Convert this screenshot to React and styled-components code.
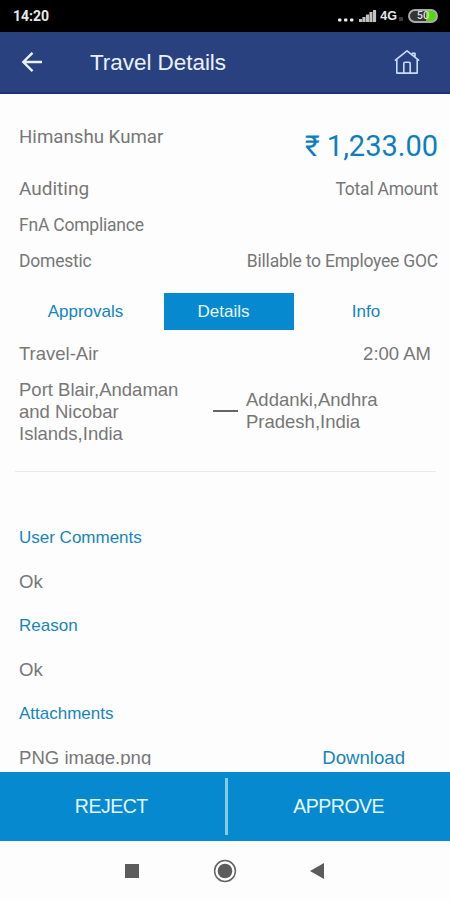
import React, { useState } from 'react';
import styled, { createGlobalStyle } from 'styled-components';

const GlobalStyle = createGlobalStyle`
  * {
    box-sizing: border-box;
  }

  body {
    margin: 0;
    background: #fdfdfd;
  }
`;

const Screen = styled.div`
  display: flex;
  flex-direction: column;
  width: 450px;
  height: 900px;
  overflow: hidden;
  background: #fdfdfd;
  color: #777;
  font-family: 'Liberation Sans', Arial, sans-serif;
`;

// Phone status bar
const StatusBar = styled.div`
  display: flex;
  flex: none;
  align-items: center;
  justify-content: space-between;
  height: 32px;
  padding: 0 12px 0 13px;
  background: #000;
  color: #e8e8e8;
  font-family: Roboto, sans-serif;
`;

const Clock = styled.span`
  font-size: 14px;
  font-weight: 700;
  line-height: 32px;
`;

const StatusIcons = styled.div`
  display: flex;
  align-items: center;
  height: 32px;
`;

const Network = styled.span`
  margin: 0 2px 0 3px;
  font-family: 'Liberation Sans', Arial, sans-serif;
  font-size: 12.5px;
  font-weight: 700;
`;

const Roaming = styled.span`
  width: 4px;
  height: 4px;
  margin: 6px 5px 0 0;
  background: #3c3c3c;
`;

const Battery = styled.span`
  width: 30px;
  height: 14px;
  border: 2px solid #aaa;
  border-radius: 7px;
  background: linear-gradient(90deg, #333 62%, #55d614 62%);
  color: #ddd;
  font-size: 11px;
  font-weight: 500;
  line-height: 10px;
  text-align: center;
`;

// App header
const Header = styled.header`
  display: flex;
  flex: none;
  align-items: center;
  height: 62px;
  padding: 0 30px 0 20px;
  border-bottom: 2px solid #173374;
  background: #29417f;
  color: #e9f1ff;
`;

const IconButton = styled.button`
  display: flex;
  padding: 0;
  border: none;
  background: none;
  color: inherit;
  cursor: pointer;
`;

const Title = styled.h1`
  flex: 1;
  margin: 1px 0 0 46px;
  font-size: 22.5px;
  font-weight: 400;
  letter-spacing: -0.05px;
  line-height: 28px;
`;

const Body = styled.main`
  flex: none;
  height: 671px;
  overflow: hidden;
`;

const Summary = styled.section`
  display: flex;
  justify-content: space-between;
  height: 199px;
  padding: 32px 12px 0 19px;
  font-family: Roboto, sans-serif;
`;

const Column = styled.div`
  display: flex;
  flex-direction: column;
  align-items: ${(props) => (props.$right ? 'flex-end' : 'flex-start')};
`;

const Line = styled.div`
  height: 22px;
  margin-bottom: ${(props) => props.$gap || 14}px;
  font-size: ${(props) => props.$size || 17.5}px;
  letter-spacing: ${(props) => (props.$size ? 0 : -0.22)}px;
  line-height: ${(props) => (props.$size ? 23 : 24)}px;
  white-space: nowrap;
`;

const Amount = styled.div`
  height: 36px;
  margin: 2px 0 13px;
  color: #0d7fc0;
  font-size: 29px;
  line-height: 36px;
`;

const Tabs = styled.nav`
  display: flex;
  justify-content: center;
  height: 37px;
  padding-left: 8px;
`;

const Tab = styled.button`
  flex: none;
  width: ${(props) => props.$width}px;
  padding: 0 ${(props) => props.$inset}px 0 0;
  border: none;
  background: ${(props) => (props.$active ? '#0789d0' : 'transparent')};
  color: ${(props) => (props.$active ? '#e6f7ff' : '#1484c4')};
  font-family: inherit;
  font-size: 17px;
  line-height: 37px;
  cursor: pointer;
`;

const Trip = styled.section`
  height: 142px;
  margin: 0 14px 0 15px;
  padding: 13px 5px 0 4px;
  border-bottom: 1px solid #e9e9e9;
  font-size: 18.5px;
  line-height: 22px;
`;

const TripHead = styled.div`
  display: flex;
  justify-content: space-between;
`;

const Route = styled.div`
  display: flex;
  align-items: center;
  margin-top: 14px;
`;

const Place = styled.div`
  width: ${(props) => props.$width}px;
  padding-bottom: ${(props) => props.$lift || 0}px;
`;

const Dash = styled.span`
  width: 25px;
  height: 2px;
  margin: -2px 8px 0 28px;
  background: #666;
`;

const Notes = styled.section`
  padding: 56px 45px 0 19px;
`;

const Label = styled.h2`
  margin: 0;
  color: #1785bb;
  font-size: 17px;
  font-weight: 400;
  line-height: 20px;
`;

const Value = styled.div`
  display: flex;
  justify-content: space-between;
  margin: 24px 0;
  font-size: 18.6px;
  line-height: 20px;
`;

const Download = styled.a`
  color: #1785bb;
  cursor: pointer;
`;

const Actions = styled.footer`
  display: flex;
  flex: none;
  align-items: center;
  height: 69px;
  margin-top: 7px;
  background: #0789d0;
`;

const Action = styled.button`
  flex: 1;
  padding: 0 ${(props) => props.$inset || 0}px 1px 0;
  border: none;
  background: none;
  color: #e2f7ff;
  font-family: inherit;
  font-size: 19.5px;
  letter-spacing: -0.5px;
  line-height: 67px;
  cursor: pointer;
`;

const Divider = styled.span`
  width: 3px;
  height: 57px;
  background: #84cbe0;
`;

const NavBar = styled.div`
  display: flex;
  flex: none;
  align-items: center;
  justify-content: center;
  gap: 73px;
  height: 59px;
`;

const SignalIcon = () => (
  <svg width="41" height="14" viewBox="0 0 41 14" fill="#eee">
    <rect x="2" y="9.5" width="3.4" height="3" rx="1" />
    <rect x="8" y="9.5" width="3.4" height="3" rx="1" />
    <rect x="14" y="9.5" width="3.4" height="3" rx="1" />
    <g fill="#c2c2c2">
      <rect x="23" y="10" width="3.1" height="3" />
      <rect x="26.4" y="8" width="3.1" height="5" />
      <rect x="29.9" y="5.5" width="3.1" height="7.5" />
      <rect x="33.4" y="3" width="3.1" height="10" />
      <rect x="37" y="1" width="3.1" height="12" />
    </g>
  </svg>
);

const BackIcon = () => (
  <svg width="24" height="22" viewBox="0 0 24 22" fill="none" stroke="currentColor" strokeWidth="2.4">
    <path d="M22 11H3.5M12.5 1.8L3.3 11l9.2 9.2" />
  </svg>
);

const HomeIcon = () => (
  <svg width="26" height="26" viewBox="0 0 26 26" fill="none" stroke="#c9dcfb" strokeWidth="1.6" strokeLinejoin="round" strokeLinecap="round">
    <path d="M1.4 11.2L13 1.8l11.6 9.4M2.8 10.2v13.9h20.4V10.2M9.8 24v-9.6q0-1.2 1.2-1.2h4q1.2 0 1.2 1.2V24M18.4 4.4h2.6v3.2" />
  </svg>
);

const tabs = [
  { name: 'Approvals', width: 156, inset: 1 },
  { name: 'Details', width: 130, inset: 11 },
  { name: 'Info', width: 156, inset: 12 },
];

const App = () => {
  const [active, setActive] = useState('Details');

  return (
    <Screen>
      <GlobalStyle />
      <StatusBar>
        <Clock>14:20</Clock>
        <StatusIcons>
          <SignalIcon />
          <Network>4G</Network>
          <Roaming />
          <Battery>50</Battery>
        </StatusIcons>
      </StatusBar>

      <Header>
        <IconButton aria-label="Back"><BackIcon /></IconButton>
        <Title>Travel Details</Title>
        <IconButton aria-label="Home"><HomeIcon /></IconButton>
      </Header>

      <Body>
        <Summary>
          <Column>
            <Line $size={18.7} $gap={29}>Himanshu Kumar</Line>
            <Line $size={19}>Auditing</Line>
            <Line>FnA Compliance</Line>
            <Line>Domestic</Line>
          </Column>
          <Column $right>
            <Amount>₹ 1,233.00</Amount>
            <Line $gap={50}>Total Amount</Line>
            <Line>Billable to Employee GOC</Line>
          </Column>
        </Summary>

        <Tabs>
          {tabs.map((tab) => (
            <Tab
              key={tab.name}
              $width={tab.width}
              $inset={tab.inset}
              $active={tab.name === active}
              onClick={() => setActive(tab.name)}
            >
              {tab.name}
            </Tab>
          ))}
        </Tabs>

        <Trip>
          <TripHead>
            <span>Travel-Air</span>
            <span>2:00 AM</span>
          </TripHead>
          <Route>
            <Place $width={166}>Port Blair,Andaman and Nicobar Islands,India</Place>
            <Dash />
            <Place $width={150} $lift={2}>Addanki,Andhra Pradesh,India</Place>
          </Route>
        </Trip>

        <Notes>
          <Label>User Comments</Label>
          <Value>Ok</Value>
          <Label>Reason</Label>
          <Value>Ok</Value>
          <Label>Attachments</Label>
          <Value>
            <span>PNG image.png</span>
            <Download>Download</Download>
          </Value>
        </Notes>
      </Body>

      <Actions>
        <Action $inset={2}>REJECT</Action>
        <Divider />
        <Action>APPROVE</Action>
      </Actions>

      <NavBar>
        <svg width="16" height="16" viewBox="0 0 16 16">
          <rect x="1" y="1" width="14" height="14" fill="#5c5c5c" />
        </svg>
        <svg width="24" height="24" viewBox="0 0 24 24">
          <circle cx="12" cy="12" r="10.4" fill="none" stroke="#666" strokeWidth="1.5" />
          <circle cx="12" cy="12" r="7.3" fill="#5c5c5c" />
        </svg>
        <svg width="16" height="18" viewBox="0 0 16 18">
          <path d="M0 9L14 1v16z" fill="#5c5c5c" />
        </svg>
      </NavBar>
    </Screen>
  );
};

export default App;
